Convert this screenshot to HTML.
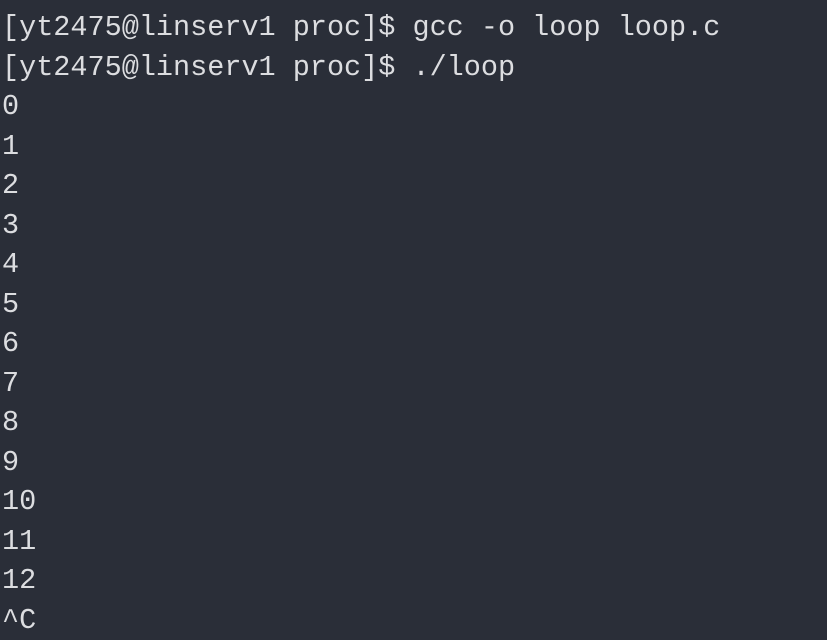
<!DOCTYPE html>
<html><head><meta charset="utf-8"><style>
html,body{margin:0;padding:0;background:#2a2e38;width:827px;height:632px;overflow:hidden}
pre{margin:0;position:absolute;left:2px;top:8px;font-family:"Liberation Mono","DejaVu Sans Mono",monospace;font-size:28.5px;line-height:39.5px;color:#dcdde0}
</style></head><body>
<pre>[yt2475@linserv1 proc]$ gcc -o loop loop.c
[yt2475@linserv1 proc]$ ./loop
0
1
2
3
4
5
6
7
8
9
10
11
12
^C</pre>
</body></html>
